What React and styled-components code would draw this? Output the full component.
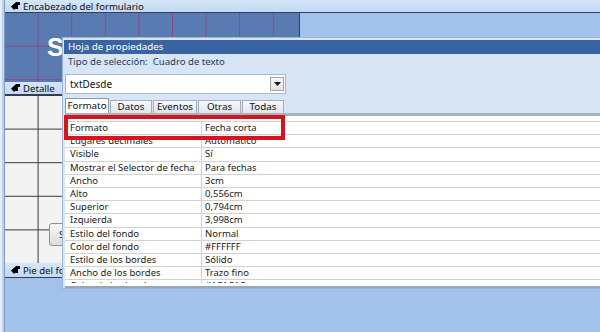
import React from "react";
import styled, { createGlobalStyle } from "styled-components";

const GlobalStyle = createGlobalStyle`
  html, body { margin: 0; padding: 0; background: #a3c2e9; }
  body { font-family: "Segoe UI", "Noto Sans", "Open Sans", sans-serif; }
  * { box-sizing: border-box; }
`;

const UI_FONT = `"Segoe UI", "Noto Sans", "Open Sans", sans-serif`;

const Screen = styled.div`
  position: relative;
  width: 600px;
  height: 332px;
  overflow: hidden;
  display: flex;
  background: #a3c2e9;
  font-family: ${UI_FONT};
`;

const Ruler = styled.div`
  width: 5px;
  flex: none;
  background: linear-gradient(to right, #e4eefb 0 2px, #bcd1ec 2px 4px);
  border-right: 1px solid #7f9cc6;
`;

const Designer = styled.div`
  flex: 1;
  display: flex;
  flex-direction: column;
  min-width: 0;
`;

const SectionBar = styled.div`
  height: ${(p) => p.$h}px;
  flex: none;
  display: flex;
  align-items: center;
  gap: 3px;
  padding-left: 6px;
  background: linear-gradient(#d6e6fa, #c2d8f4);
  border-bottom: 1px solid #2e4064;
  font-size: 9.6px;
  color: #111;
  white-space: nowrap;
`;

const PointerIcon = () => (
  <svg width="9" height="8" viewBox="0 0 9 8">
    <path d="M0 4.5 L4 1 L5 0 L9 0 L9 3 L7 3 L7 7 L4 7 L3 8 Z" fill="#000" />
  </svg>
);

const SectionArea = styled.div`
  height: ${(p) => p.$h}px;
  flex: none;
  display: flex;
`;

const HeaderSection = styled.div`
  position: relative;
  width: 295px;
  height: 100%;
  border-right: 1px solid #2e4064;
  background-color: #5a7bb1;
  background-image:
    linear-gradient(to right, #8c4a84 1px, transparent 1px),
    linear-gradient(to bottom, #8c4a84 1px, transparent 1px);
  background-size: 33.6px 33.6px;
  background-position: -1px -1px;
`;

const DetailSection = styled.div`
  position: relative;
  width: 295px;
  height: 100%;
  background-color: #f3f3f3;
  background-image:
    linear-gradient(to right, #3a3a3a 1px, transparent 1px),
    linear-gradient(to bottom, #3a3a3a 1px, transparent 1px);
  background-size: 33.6px 33.6px;
  background-position: -1px 0px;
`;

const TitleLabel = styled.div`
  position: absolute;
  left: 42px;
  top: 22px;
  font-family: "Liberation Sans", Arial, sans-serif;
  font-weight: bold;
  font-size: 25px;
  line-height: 25px;
  color: #ffffff;
  white-space: nowrap;
`;

const DesignButton = styled.div`
  position: absolute;
  left: 44px;
  top: 128px;
  width: 120px;
  height: 23px;
  border: 1px solid #8d8d8d;
  border-radius: 3px;
  background: linear-gradient(#fafafa, #dcdcdc);
  font-size: 9.6px;
  line-height: 21px;
  padding-left: 9px;
  color: #222;
`;

const Sheet = styled.div`
  position: absolute;
  left: 62px;
  top: 37px;
  width: 560px;
  height: 252px;
  display: flex;
  flex-direction: column;
  background: #d7e5f5;
  border: 1px solid #98b4da;
  padding: 2px 0 0 2px;
`;

const SheetTitle = styled.div`
  height: 14px;
  flex: none;
  margin-left: -1px;
  padding-left: 4px;
  background: #3a63a1;
  color: #ffffff;
  font-size: 9.8px;
  line-height: 14px;
  white-space: nowrap;
`;

const SelectionLine = styled.div`
  height: 20px;
  flex: none;
  padding-left: 3px;
  font-size: 9.6px;
  line-height: 15px;
  color: #1f3b66;
  white-space: pre;
`;

const Combo = styled.div`
  width: 221px;
  height: 20px;
  flex: none;
  display: flex;
  align-items: center;
  justify-content: space-between;
  background: #ffffff;
  border: 1px solid #a8b9cf;
  padding: 0 1px 0 4px;
  font-size: 10px;
  color: #111;
`;

const ComboButton = styled.div`
  width: 14px;
  height: 14px;
  display: flex;
  align-items: center;
  justify-content: center;
  border: 1px solid #a5a5a5;
  background: linear-gradient(#f8f8f8, #e2e2e2);
`;

const TabRow = styled.div`
  height: 15px;
  flex: none;
  margin-top: 4px;
  display: flex;
  align-items: flex-end;
  gap: 1px;
`;

const Tab = styled.div`
  width: ${(p) => p.$w}px;
  height: ${(p) => (p.$active ? 15 : 13)}px;
  border: 1px solid ${(p) => (p.$active ? "#8d9cb0" : "#a2aebd")};
  border-bottom: none;
  background: ${(p) =>
    p.$active ? "#ffffff" : "linear-gradient(#f6f8fb, #dfe5ed)"};
  font-size: 9.8px;
  line-height: ${(p) => (p.$active ? 13 : 12)}px;
  text-align: center;
  color: #111;
`;

const Panel = styled.div`
  flex: 1;
  min-height: 0;
  display: flex;
  flex-direction: column;
  background: #ffffff;
  border-top: 3px solid #a9b3be;
  padding: 5px 0 3px;
  border-bottom: 2px solid #9aa6b3;
`;

const PropGrid = styled.div`
  flex: 1;
  min-height: 0;
  overflow: hidden;
`;

const Row = styled.div`
  display: grid;
  grid-template-columns: 137px 1fr;
  height: 13.2px;
  border-top: 1px solid #d2d2d2;
  font-size: 9.5px;
  line-height: 12px;
  color: #1a1a1a;
  white-space: nowrap;
`;

const NameCell = styled.div`
  padding-left: 5px;
  border-right: 1px solid #d2d2d2;
  overflow: hidden;
`;

const ValueCell = styled.div`
  padding-left: 3px;
  overflow: hidden;
`;

const Highlight = styled.div`
  position: absolute;
  left: 64px;
  top: 115px;
  width: 221px;
  height: 25px;
  border: 4px solid #d5141e;
`;

const tabs = [
  { label: "Formato", w: 44, active: true },
  { label: "Datos", w: 42 },
  { label: "Eventos", w: 44 },
  { label: "Otras", w: 43 },
  { label: "Todas", w: 42 },
];

const props = [
  ["Formato", "Fecha corta"],
  ["Lugares decimales", "Automático"],
  ["Visible", "Sí"],
  ["Mostrar el Selector de fecha", "Para fechas"],
  ["Ancho", "3cm"],
  ["Alto", "0,556cm"],
  ["Superior", "0,794cm"],
  ["Izquierda", "3,998cm"],
  ["Estilo del fondo", "Normal"],
  ["Color del fondo", "#FFFFFF"],
  ["Estilo de los bordes", "Sólido"],
  ["Ancho de los bordes", "Trazo fino"],
  ["Color de los bordes", "#1C1C1C"],
];

export default function App() {
  return (
    <>
      <GlobalStyle />
      <Screen>
        <Ruler />
        <Designer>
          <SectionBar $h={13}>
            <PointerIcon />
            Encabezado del formulario
          </SectionBar>
          <SectionArea $h={69}>
            <HeaderSection>
              <TitleLabel>Seleccionar fechas</TitleLabel>
            </HeaderSection>
          </SectionArea>
          <SectionBar $h={13}>
            <PointerIcon />
            Detalle
          </SectionBar>
          <SectionArea $h={168}>
            <DetailSection>
              <DesignButton>Seleccionar</DesignButton>
            </DetailSection>
          </SectionArea>
          <SectionBar $h={15}>
            <PointerIcon />
            Pie del formulario
          </SectionBar>
        </Designer>

        <Sheet>
          <SheetTitle>Hoja de propiedades</SheetTitle>
          <SelectionLine>{"Tipo de selección:  Cuadro de texto"}</SelectionLine>
          <Combo>
            txtDesde
            <ComboButton>
              <svg width="7" height="4" viewBox="0 0 7 4">
                <path d="M0 0 L7 0 L3.5 4 Z" fill="#111" />
              </svg>
            </ComboButton>
          </Combo>
          <TabRow>
            {tabs.map((t) => (
              <Tab key={t.label} $w={t.w} $active={t.active}>
                {t.label}
              </Tab>
            ))}
          </TabRow>
          <Panel>
            <PropGrid>
              {props.map(([n, v]) => (
                <Row key={n}>
                  <NameCell>{n}</NameCell>
                  <ValueCell>{v}</ValueCell>
                </Row>
              ))}
            </PropGrid>
          </Panel>
        </Sheet>
        <Highlight />
      </Screen>
    </>
  );
}
